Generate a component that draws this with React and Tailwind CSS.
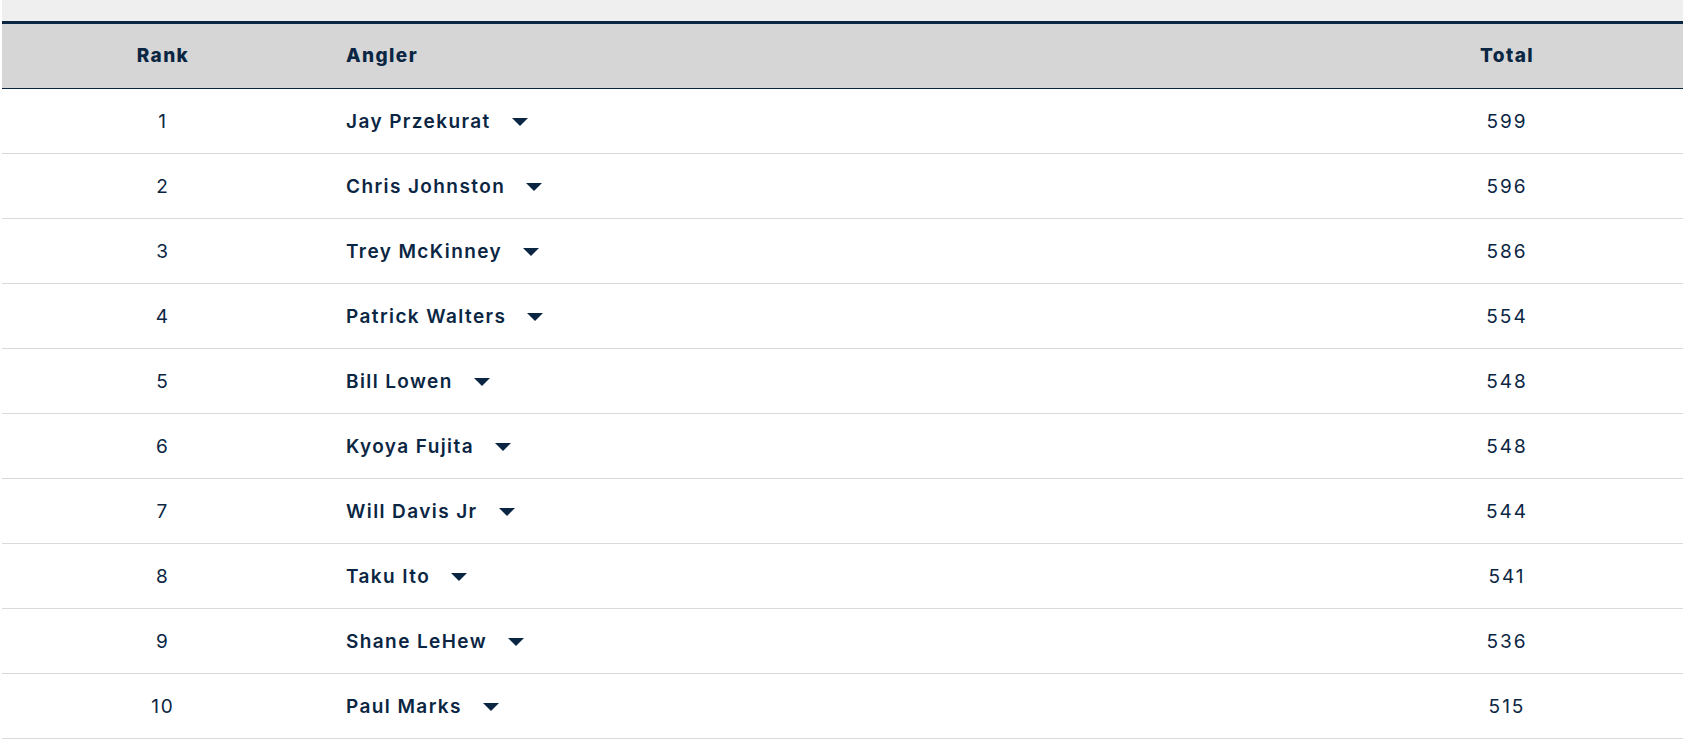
const rows = [
  { rank: 1, name: 'Jay Przekurat', total: 599 },
  { rank: 2, name: 'Chris Johnston', total: 596 },
  { rank: 3, name: 'Trey McKinney', total: 586 },
  { rank: 4, name: 'Patrick Walters', total: 554 },
  { rank: 5, name: 'Bill Lowen', total: 548 },
  { rank: 6, name: 'Kyoya Fujita', total: 548 },
  { rank: 7, name: 'Will Davis Jr', total: 544 },
  { rank: 8, name: 'Taku Ito', total: 541 },
  { rank: 9, name: 'Shane LeHew', total: 536 },
  { rank: 10, name: 'Paul Marks', total: 515 },
];

function Caret() {
  return (
    <svg viewBox="0 0 16 8" className="w-4 h-2 ml-[21px] shrink-0">
      <path d="M0 0H16L8 8Z" fill="#0b2643" />
    </svg>
  );
}

export default function App() {
  return (
    <div className="min-h-screen bg-white px-[2px] text-[#0b2643]" style={{ fontFamily: 'Inter, "Open Sans", sans-serif' }}>
      <div className="h-[21px] bg-[#efefef]" />
      <div className="border-t-[3px] border-[#0b2643]">
        <div className="grid grid-cols-[322px_1fr_352px] h-[65px] items-center bg-[#d6d6d6] border-b border-[#0b2643] text-[19px] font-extrabold tracking-[1.4px]">
          <div className="text-center">Rank</div>
          <div className="pl-[22px]">Angler</div>
          <div className="text-center">Total</div>
        </div>
        {rows.map((r) => (
          <div key={r.rank} className="grid grid-cols-[322px_1fr_352px] h-[65px] items-center border-b border-[#dadada] text-[19px]">
            <div className="text-center tracking-[2px] pt-[2px]">{r.rank}</div>
            <div className="pl-[22px] flex items-center pt-[2px]">
              <span className="font-semibold tracking-[1.4px]">{r.name}</span>
              <Caret />
            </div>
            <div className="text-center tracking-[2px] pt-[2px]">{r.total}</div>
          </div>
        ))}
      </div>
    </div>
  );
}
